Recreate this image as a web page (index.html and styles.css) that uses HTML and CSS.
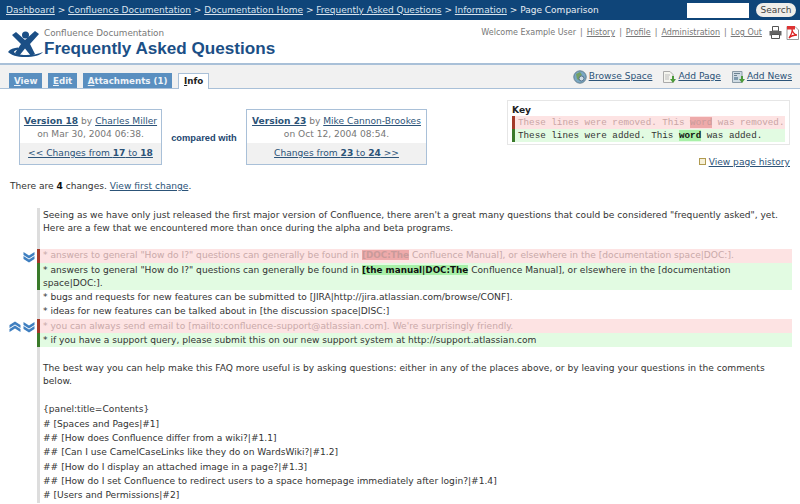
FILE: index.html
```html
<!DOCTYPE html>
<html lang="en">
<head>
<meta charset="utf-8">
<title>Page Comparison</title>
<link rel="stylesheet" href="styles.css">
</head>
<body>
<div class="topbar">
  <div class="crumbs"><a href="#">Dashboard</a> &gt; <a href="#">Confluence Documentation</a> &gt; <a href="#">Documentation Home</a> &gt; <a href="#">Frequently Asked Questions</a> &gt; <a href="#">Information</a> &gt; Page Comparison</div>
  <form class="search"><input class="search-box" type="text"><span class="search-btn">Search</span></form>
</div>
<header class="head">
  <div class="brand">
    <svg class="logo" width="36" height="30" viewBox="0 0 36 30">
      <path d="M0 22C2 19 6 18 10 17.500L11 19.500C8 20 6 21 6 22C7 24 12 25 18 25C25 25 31 24 35 22C33 25 26 27 17 27C9 27 3 25 0 22Z" fill="#1b4f86"/>
      <circle cx="17.500" cy="5" r="3.500" fill="#1b4f86"/>
      <path d="M4 5L8 2L17 10L27 1L31 4L22 14L27 24L23 26L17 18.500L11 26L7 23L13 14Z" fill="#1b4f86"/>
    </svg>
    <div class="titles">
      <div class="space">Confluence Documentation</div>
      <h1 class="title">Frequently Asked Questions</h1>
    </div>
  </div>
  <div class="userbar">
    <span>Welcome Example User</span><i>|</i><a href="#">History</a><i>|</i><a href="#">Profile</a><i>|</i><a href="#">Administration</a><i>|</i><a href="#">Log Out</a>
    <svg class="print" width="13" height="13" viewBox="0 0 13 13"><path d="M3.500 .5H9.500V5H3.500Z" fill="#fff" stroke="#555"/><path d="M.5 5H12.500V9.500H.5Z" fill="#666"/><path d="M2.500 8.500H10.500V12.500H2.500Z" fill="#fff" stroke="#555"/></svg>
    <svg class="pdf" width="13" height="14" viewBox="0 0 13 14"><path d="M1 .5H9L12.500 4V13.500H1Z" fill="#fff" stroke="#999"/><path d="M3 12C5 9 7 6 6 3C6 6 9 9 11 9C8 9 5 10 3 12Z" fill="none" stroke="#d22" stroke-width="1.300"/><path d="M1 0H9V3.500H1Z" fill="#d33"/></svg>
  </div>
</header>
<nav class="tabbar">
  <div class="tabs">
    <a class="tab" href="#"><u>V</u>iew</a>
    <a class="tab" href="#"><u>E</u>dit</a>
    <a class="tab" href="#"><u>A</u>ttachments (1)</a>
    <a class="tab active" href="#"><u>I</u>nfo</a>
  </div>
  <div class="actions">
    <a class="action" href="#"><svg width="14" height="14" viewBox="0 0 14 14"><circle cx="7" cy="7" r="6.200" fill="#79a7c4" stroke="#64808f"/><path d="M3 4L7 2L9 5L6 7L7 11L4 9Z" fill="#74a063"/><circle cx="8.500" cy="8.500" r="2.500" fill="#cfdde6" stroke="#53708a"/></svg><span>Browse Space</span></a>
    <a class="action" href="#"><svg width="14" height="14" viewBox="0 0 14 14"><path d="M1.500 1.500H8L11 4.500V12.500H1.500Z" fill="#f4f4ee" stroke="#aaa"/><path d="M3 5H8M3 7H7M3 9H7" stroke="#bbb"/><path d="M10 6V9H8L11 13L14 9H12V6Z" fill="#4c9a3a"/></svg><span>Add Page</span></a>
    <a class="action" href="#"><svg width="14" height="14" viewBox="0 0 14 14"><path d="M1.500 1.500H11V12.500H1.500Z" fill="#cfdbe3" stroke="#8a9aa6"/><path d="M3 3.500H9M3 5.500H6" stroke="#6d8291"/><path d="M3 7H7V10H3Z" fill="#7d99ad"/><path d="M10 6V9H8L11 13L14 9H12V6Z" fill="#4c9a3a"/></svg><span>Add News</span></a>
  </div>
</nav>
<main class="main">
  <section class="compare">
    <div class="versions">
      <div class="vbox vbox-left">
        <div class="vinfo"><a href="#"><b>Version 18</b></a> by <a href="#">Charles Miller</a><br>on Mar 30, 2004 06:38.</div>
        <div class="vnav"><a href="#">&lt;&lt; Changes from <b>17</b> to <b>18</b> </a></div>
      </div>
      <div class="with">compared with</div>
      <div class="vbox vbox-right">
        <div class="vinfo"><a href="#"><b>Version 23</b></a> by <a href="#">Mike Cannon-Brookes</a><br>on Oct 12, 2004 08:54.</div>
        <div class="vnav"><a href="#">Changes from <b>23</b> to <b>24</b> &gt;&gt;</a></div>
      </div>
    </div>
    <div class="side">
      <div class="key">
        <div class="key-title">Key</div>
        <div class="key-line key-del">These lines were removed. This <span class="w-del">word</span> was removed.</div>
        <div class="key-line key-add">These lines were added. This <b class="w-add">word</b> was added.</div>
      </div>
      <div class="history"><span class="hist-icon"></span><a href="#">View page history</a></div>
    </div>
  </section>
  <p class="count">There are <b>4</b> changes. <a href="#">View first change</a>.</p>
  <section class="diffwrap">
    <div class="gutter">
      <div class="arrows a1"><svg class="chev" width="12" height="12" viewBox="0 0 12 12"><path d="M.5 1L6 4.500L11.500 1V4L6 7.500L.5 4ZM.5 5L6 8.500L11.500 5V8L6 11.500L.5 8Z" fill="#3f7fc0"/></svg></div>
      <div class="arrows a2"><svg class="chev" width="12" height="12" viewBox="0 0 12 12"><path d="M.5 11L6 7.500L11.500 11V8L6 4.500L.5 8ZM.5 7L6 3.500L11.500 7V4L6 .5L.5 4Z" fill="#3f7fc0"/></svg><svg class="chev" width="12" height="12" viewBox="0 0 12 12"><path d="M.5 1L6 4.500L11.500 1V4L6 7.500L.5 4ZM.5 5L6 8.500L11.500 5V8L6 11.500L.5 8Z" fill="#3f7fc0"/></svg></div>
    </div>
    <div class="diff">
      <div class="line">Seeing as we have only just released the first major version of Confluence, there aren't a great many questions that could be considered "frequently asked", yet. Here are a few that we encountered more than once during the alpha and beta programs.</div>
      <div class="line gap-small del">* answers to general "How do I?" questions can generally be found in <b class="w-del bold">[DOC:The</b> Confluence Manual], or elsewhere in the [documentation space|DOC:].</div>
      <div class="line add">* answers to general "How do I?" questions can generally be found in <b class="w-add bold">[the manual|DOC:The</b> Confluence Manual], or elsewhere in the [documentation space|DOC:].</div>
      <div class="line">* bugs and requests for new features can be submitted to [JIRA|http://jira.atlassian.com/browse/CONF].</div>
      <div class="line">* ideas for new features can be talked about in [the discussion space|DISC:]</div>
      <div class="line del">* you can always send email to [mailto:confluence-support@atlassian.com]. We're surprisingly friendly.</div>
      <div class="line add">* if you have a support query, please submit this on our new support system at http://support.atlassian.com</div>
      <div class="line gap-top">The best way you can help make this FAQ more useful is by asking questions: either in any of the places above, or by leaving your questions in the comments below.</div>
      <div class="line gap-top">{panel:title=Contents}</div>
      <div class="line"># [Spaces and Pages|#1]</div>
      <div class="line">## [How does Confluence differ from a wiki?|#1.1]</div>
      <div class="line">## [Can I use CamelCaseLinks like they do on WardsWiki?|#1.2]</div>
      <div class="line">## [How do I display an attached image in a page?|#1.3]</div>
      <div class="line">## [How do I set Confluence to redirect users to a space homepage immediately after login?|#1.4]</div>
      <div class="line"># [Users and Permissions|#2]</div>
    </div>
  </section>
</main>
</body>
</html>
```
FILE: styles.css
```css
* { box-sizing: border-box; }
html, body { margin: 0; height: 504px; overflow: hidden; background: #fff; }
body { font: 9.1px/13px "DejaVu Sans", Verdana, sans-serif; color: #333; }
a { color: #2c5378; text-decoration: underline; }

.topbar { height: 20px; background: #0f4579; color: #e8eef4; font-size: 9px; display: flex; justify-content: space-between; align-items: center; padding: 0 4px 0 6px; }
.crumbs { white-space: nowrap; }
.crumbs a { color: #d8e3ee; }
.search { display: flex; align-items: center; gap: 7px; margin: 0; }
.search-box { width: 62px; height: 15px; border: 0; background: #fff; padding: 0; }
.search-btn { width: 40px; height: 14px; border-radius: 7px; background: #f0eeea; color: #444; text-align: center; line-height: 14px; }

.head { height: 45px; border-bottom: 2px solid #a9c0d8; display: flex; justify-content: space-between; padding: 8px 1px 0 8px; }
.brand { display: flex; align-items: flex-start; }
.logo { margin-top: 2px; }
.space { color: #777; font-size: 8.8px; line-height: 11px; }
.title { margin: 0; font: bold 17.1px/19px "Liberation Sans", Arial, sans-serif; color: #1b4f86; }
.userbar { display: flex; align-items: flex-start; color: #777; font-size: 8px; line-height: 9px; white-space: nowrap; }
.userbar a { color: #777; }
.userbar i { font-style: normal; margin: 0 4px; }
.print { margin: -2px 0 0 7px; }
.pdf { margin: -2px 0 0 4px; }

.tabbar { height: 24px; background: #f1f1f1; border-bottom: 1px solid #a9c0d8; display: flex; justify-content: space-between; align-items: flex-end; padding: 0 8px 0 9px; }
.tabs { display: flex; gap: 5.5px; font-size: 8.7px; }
.tab { height: 15px; background: #5a8fc0; color: #eef3f8; font-weight: bold; line-height: 16px; padding: 0 5px; text-decoration: none; }
.tab.active { height: 16px; background: #fff; color: #222; border: 1px solid #a9c0d8; border-bottom: 0; margin-bottom: -1px; padding: 0 5px; line-height: 15px; }
.actions { display: flex; gap: 10px; align-self: center; }
.action { display: flex; align-items: center; gap: 2px; }

.compare { display: flex; justify-content: space-between; padding: 20px 10px 0 19px; }
.versions { display: flex; align-items: center; height: 56px; }
.vbox { border: 1px solid #a9c0d8; height: 56px; text-align: center; color: #777; display: flex; flex-direction: column; white-space: nowrap; }
.vbox-left { width: 143px; }
.vbox-right { width: 181px; }
.vinfo { height: 33px; padding-top: 5px; }
.vnav { flex: 1; background: #f1f1f1; padding-top: 4px; }
.with { width: 84px; padding-top: 3px; text-align: center; font: bold 9.3px/13px "Liberation Sans", Arial, sans-serif; color: #23466f; }
.side { width: 283px; display: flex; flex-direction: column; align-items: flex-end; margin-top: -9px; }
.key { width: 283px; border: 1px solid #e6e6e6; padding: 3px 4px 2px 4px; font-family: "Liberation Mono", monospace; font-size: 9.25px; }
.key-title { font: bold 9.1px/12px "DejaVu Sans", sans-serif; color: #222; }
.key-line { height: 13px; border-left: 3px solid; padding-left: 3px; white-space: nowrap; line-height: 13px; }
.key-del { background: #fde3e3; border-color: #a33a2a; color: #c9a4a4; }
.key-add { background: #e2fbe2; border-color: #3a7a2a; color: #333; }
.w-del { background: #eeaaaa; color: #c99a9a; }
.w-add { background: #a8f0a8; color: #111; }
.bold { font-size: 8.8px; }
.history { margin-top: 11px; }
.hist-icon { display: inline-block; width: 7px; height: 7px; border: 1px solid #b09a50; background: #f6f0d8; margin-right: 3px; }

.count { margin: 11px 0 0 10px; color: #333; }
.count b { color: #111; }

.diffwrap { display: flex; margin-top: 15px; padding-right: 8px; }
.gutter { width: 37px; position: relative; }
.arrows { position: absolute; right: 2px; display: flex; gap: 2px; }
.a1 { top: 43px; }
.a2 { top: 113px; }
.diff { flex: 1; border-left: 3px solid #ddd; }
.line { padding: .65px 8px .65px 3px; color: #333; }
.line.gap-top { margin-top: 14px; }
.line.gap-small { margin-top: 13.5px; }
.del { background: #fde3e3; color: #c9a9a9; margin-left: -3px; border-left: 3px solid #a33a2a; }
.add { background: #e2fbe2; color: #333; margin-left: -3px; border-left: 3px solid #3a7a2a; }
```
